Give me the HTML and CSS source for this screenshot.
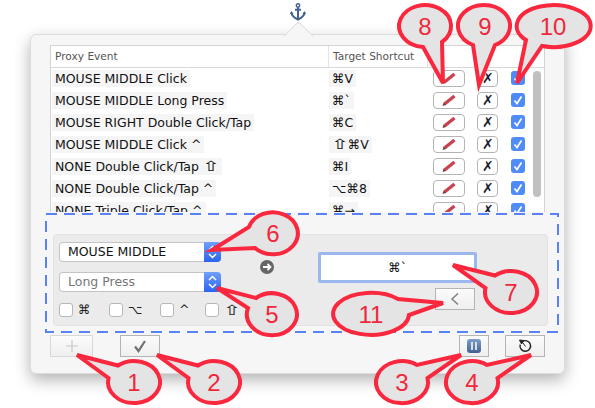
FILE: index.html
```html
<!DOCTYPE html>
<html lang="en">
<head>
  <meta charset="UTF-8" />
  <title>Proxy Events</title>
  <link rel="stylesheet" href="styles.css">
</head>
<body>
  <svg width="0" height="0" class="defs">
    <symbol id="pencil" viewBox="0 0 16 16">
      <path d="M3.500 12 L13.500 4" fill="none" stroke="#c9424f" stroke-width="3.400"/>
      <path d="M1.500 14 L2.500 10.500 L5 13 Z" fill="#7d3b40"/>
    </symbol>
    <symbol id="tick" viewBox="0 0 14 14">
      <path d="M3.500 7.500 L6 10.500 L10.500 3.500" fill="none" stroke="#fff" stroke-width="1.700"/>
    </symbol>
    <symbol id="updown" viewBox="0 0 17 20">
      <path d="M5 8 L8.500 4.500 L12 8 M5 12 L8.500 15.500 L12 12" fill="none" stroke="#fff" stroke-width="1.500"/>
    </symbol>
  </svg>

  <div class="anchor-bar">
    <svg class="anchor" width="16" height="18" viewBox="0 0 16 18">
      <circle cx="8" cy="2.500" r="1.700" fill="none" stroke="#44628f" stroke-width="1.500"/>
      <path d="M8 4 V16.500 M5 6.800 H11" fill="none" stroke="#44628f" stroke-width="2"/>
      <path d="M1.500 9.500 C1.500 13.500 5 15 8 16.500 C11 15 14.500 13.500 14.500 9.500" fill="none" stroke="#44628f" stroke-width="2"/>
      <path d="M0 11 L1.500 8 L3.500 11 Z M12.500 11 L14.500 8 L16 11 Z" fill="#44628f"/>
    </svg>
  </div>

  <div class="panel">
    <div class="table">
      <div class="table-head">
        <div class="col-event">Proxy Event</div>
        <div class="col-target">Target Shortcut</div>
      </div>
      <div class="rows">
        <div class="row">
          <div><span class="cell-text">MOUSE MIDDLE Click</span></div>
          <div><span class="cell-text">⌘V</span></div>
          <button class="btn-edit"><svg width="16" height="16"><use href="#pencil"/></svg></button>
          <button class="btn-del">✗</button>
          <span class="check on"><svg width="14" height="14"><use href="#tick"/></svg></span>
        </div>
        <div class="row">
          <div><span class="cell-text">MOUSE MIDDLE Long Press</span></div>
          <div><span class="cell-text">⌘`</span></div>
          <button class="btn-edit"><svg width="16" height="16"><use href="#pencil"/></svg></button>
          <button class="btn-del">✗</button>
          <span class="check on"><svg width="14" height="14"><use href="#tick"/></svg></span>
        </div>
        <div class="row">
          <div><span class="cell-text">MOUSE RIGHT Double Click/Tap</span></div>
          <div><span class="cell-text">⌘C</span></div>
          <button class="btn-edit"><svg width="16" height="16"><use href="#pencil"/></svg></button>
          <button class="btn-del">✗</button>
          <span class="check on"><svg width="14" height="14"><use href="#tick"/></svg></span>
        </div>
        <div class="row">
          <div><span class="cell-text">MOUSE MIDDLE Click ^</span></div>
          <div><span class="cell-text"><span class="shift">⇧</span>⌘V</span></div>
          <button class="btn-edit"><svg width="16" height="16"><use href="#pencil"/></svg></button>
          <button class="btn-del">✗</button>
          <span class="check on"><svg width="14" height="14"><use href="#tick"/></svg></span>
        </div>
        <div class="row">
          <div><span class="cell-text">NONE Double Click/Tap <span class="shift">⇧</span></span></div>
          <div><span class="cell-text">⌘I</span></div>
          <button class="btn-edit"><svg width="16" height="16"><use href="#pencil"/></svg></button>
          <button class="btn-del">✗</button>
          <span class="check on"><svg width="14" height="14"><use href="#tick"/></svg></span>
        </div>
        <div class="row">
          <div><span class="cell-text">NONE Double Click/Tap ^</span></div>
          <div><span class="cell-text">⌥⌘8</span></div>
          <button class="btn-edit"><svg width="16" height="16"><use href="#pencil"/></svg></button>
          <button class="btn-del">✗</button>
          <span class="check on"><svg width="14" height="14"><use href="#tick"/></svg></span>
        </div>
        <div class="row">
          <div><span class="cell-text">NONE Triple Click/Tap ^</span></div>
          <div><span class="cell-text">⌘→</span></div>
          <button class="btn-edit"><svg width="16" height="16"><use href="#pencil"/></svg></button>
          <button class="btn-del">✗</button>
          <span class="check on"><svg width="14" height="14"><use href="#tick"/></svg></span>
        </div>
      </div>
      <div class="scrollbar"></div>
    </div>

    <div class="editor">
      <div class="editor-left">
        <div class="popup">
          <span class="popup-label">MOUSE MIDDLE</span>
          <span class="popup-arrows"><svg width="17" height="20"><use href="#updown"/></svg></span>
        </div>
        <div class="popup muted">
          <span class="popup-label">Long Press</span>
          <span class="popup-arrows"><svg width="17" height="20"><use href="#updown"/></svg></span>
        </div>
        <div class="modifiers">
          <div class="mod mod-cmd"><span class="check"></span>⌘</div>
          <div class="mod mod-opt"><span class="check"></span>⌥</div>
          <div class="mod mod-ctrl"><span class="check"></span>^</div>
          <div class="mod"><span class="check"></span><span class="shift">⇧</span></div>
        </div>
      </div>
      <svg class="go" width="14" height="14" viewBox="0 0 14 14">
        <circle cx="7" cy="7" r="7" fill="#666"/>
        <path d="M3 7 H10 M7.500 4 L10.500 7 L7.500 10" fill="none" stroke="#fff" stroke-width="1.800"/>
      </svg>
      <div class="editor-right">
        <div class="shortcut-field">⌘`</div>
        <button class="btn-square btn-back">
          <svg width="10" height="14" viewBox="0 0 10 14"><path d="M8 1.500 L2 7 L8 12.500" fill="none" stroke="#808080" stroke-width="1.500"/></svg>
        </button>
      </div>
    </div>

    <div class="toolbar">
      <button class="btn-square btn-add">
        <svg width="14" height="14" viewBox="0 0 14 14"><path d="M7 1 V13 M1 7 H13" stroke="#c8c8c8" stroke-width="1.200"/></svg>
      </button>
      <button class="btn-square btn-ok">
        <svg width="14" height="14" viewBox="0 0 14 14"><path d="M2 7.500 L5.500 12 L12 2" fill="none" stroke="#707070" stroke-width="2.200"/></svg>
      </button>
      <button class="btn-square btn-pause">
        <span class="pause-icon"></span>
      </button>
      <button class="btn-square btn-reset">
        <svg width="14" height="14" viewBox="0 0 14 14">
          <path d="M4 2.800 A5.300 5.300 0 1 1 2.200 5.500" fill="none" stroke="#222" stroke-width="1.400"/>
          <path d="M1.500 1 L6 1.500 L3.500 5 Z M5 4 L7.500 7.500" fill="#222" stroke="#222" stroke-width="1"/>
        </svg>
      </button>
    </div>
  </div>

  <!-- Annotations drawn on top of the screenshot -->
  <svg class="notes" width="595" height="408" viewBox="0 0 595 408">
    <rect class="dash" x="46" y="214" width="512" height="118"/>
    <path class="bubble" d="M442 42 A26 21 0 1 0 423 47 L443 83 Z"/>
    <text class="num" x="425" y="35">8</text>
    <path class="bubble" d="M495 45 A26 21 0 1 0 473 45 L479 85 Z"/>
    <text class="num" x="485" y="35">9</text>
    <path class="bubble" d="M542 46 A37 21 0 1 0 526 40 L517 83 Z"/>
    <text class="num" x="553" y="35">10</text>
    <path class="bubble" d="M249 227 A25 21 0 1 1 255 248 L212 250 Z"/>
    <text class="num" x="273" y="242">6</text>
    <path class="bubble" d="M256 298 A25 21 0 1 1 248 308 L217 288 Z"/>
    <text class="num" x="272" y="323">5</text>
    <path class="bubble" d="M118 365.500 A26 21 0 1 1 108.500 378 L77 355 Z"/>
    <text class="num" x="134" y="391">1</text>
    <path class="bubble" d="M198 365.500 A26 21 0 1 1 188.500 378 L157 355 Z"/>
    <text class="num" x="214" y="391">2</text>
    <path class="bubble" d="M417 365 A26 21 0 1 0 427.500 378 L461 355 Z"/>
    <text class="num" x="402" y="391">3</text>
    <path class="bubble" d="M487 365 A26 21 0 1 0 497.500 378 L531 355 Z"/>
    <text class="num" x="472" y="391">4</text>
    <path class="bubble" d="M495 275.500 A26 21 0 1 1 485.500 288 L453 265 Z"/>
    <text class="num" x="511" y="301">7</text>
    <path class="bubble" d="M398 299 A38 21 0 1 0 409 315 L443 303 Z"/>
    <text class="num" x="371" y="323">11</text>
  </svg>
</body>
</html>
```

FILE: styles.css
```css
body {
  font-family: 'DejaVu Sans', sans-serif;
  margin: 0;
  padding: 0;
  width: 595px;
  height: 408px;
  position: relative;
  overflow: hidden;
  background: white;
  color: #111;
}

.defs {
  position: absolute;
}

.anchor-bar {
  height: 34px;
  padding-top: 3px;
  box-sizing: border-box;
  display: flex;
  justify-content: center;
}

.anchor {
  margin-left: 1px;
}

/* Popover */
.panel {
  position: relative;
  box-sizing: border-box;
  width: 535px;
  height: 340px;
  margin-left: 30px;
  padding: 10px 19px 0;
  background: #f6f6f6;
  border: 1px solid #dcdcdc;
  border-radius: 6px;
  box-shadow: 0 6px 16px rgba(0,0,0,0.3);
}

.panel::before {
  content: "";
  position: absolute;
  top: -10px;
  left: 257px;
  width: 20px;
  height: 20px;
  background: #f6f6f6;
  border-top: 1px solid #dcdcdc;
  border-left: 1px solid #dcdcdc;
  border-top-left-radius: 4px;
  transform: rotate(45deg);
}

/* Table */
.table {
  position: relative;
  height: 166px;
  background: white;
  border: 1px solid #d4d4d4;
  border-bottom: none;
  overflow: hidden;
}

.table-head {
  display: flex;
  height: 21px;
  line-height: 21px;
  font-size: 10.6px;
  color: #555;
  border-bottom: 1px solid #d8d8d8;
}

.col-event {
  width: 273px;
  padding-left: 4px;
}

.col-target {
  width: 94px;
  padding-left: 4px;
  border-left: 1px solid #e4e4e4;
  border-right: 1px solid #e4e4e4;
}

.rows {
  margin-top: -1px;
}

.row {
  display: grid;
  grid-template-columns: 278px 104px 44px 34px 14px;
  height: 22px;
  align-items: center;
  font-size: 12.5px;
}

.row > div:first-child {
  padding-left: 1px;
}

.cell-text {
  background: #f5f5f5;
  padding: 1px 3px;
}

.shift {
  display: inline-block;
  font-size: 14px;
  line-height: 1;
  margin: 0 2px;
  transform: scaleX(1.5);
}

.btn-edit,
.btn-del {
  box-sizing: border-box;
  height: 17px;
  padding: 0;
  display: flex;
  align-items: center;
  justify-content: center;
  background: white;
  border: 1px solid #b4b4b4;
  border-radius: 4px;
}

.btn-edit {
  width: 32px;
}

.btn-del {
  width: 21px;
  font-size: 14px;
  color: #1a1f33;
}

.check {
  box-sizing: border-box;
  display: block;
  width: 14px;
  height: 14px;
  background: white;
  border: 1px solid #b8b8b8;
  border-radius: 3px;
  flex: none;
}

.check.on {
  background: #4f8cf7;
  border: none;
}

.check svg {
  display: block;
}

.scrollbar {
  position: absolute;
  top: 25px;
  left: 482px;
  width: 8px;
  height: 126px;
  background: #c0c0c0;
  border-radius: 4px;
}

/* Editor box */
.editor {
  box-sizing: border-box;
  display: flex;
  width: 495px;
  height: 92px;
  margin: 22px -3px 0 3px;
  padding: 7px 5px;
  background: #ebebeb;
  border: 1px solid #e2e2e2;
  border-radius: 4px;
}

.editor-left {
  width: 162px;
  flex: none;
}

.popup {
  box-sizing: border-box;
  display: flex;
  justify-content: space-between;
  height: 20px;
  margin-bottom: 10px;
  background: white;
  border-radius: 4px;
  box-shadow: 0 0 0 1px #c4c4c4 inset;
  font-size: 12.5px;
  line-height: 19px;
  overflow: hidden;
}

.popup.muted {
  color: #777;
}

.popup-label {
  padding-left: 9px;
}

.popup-arrows {
  width: 17px;
  height: 20px;
  background: linear-gradient(#6fa0fa, #2b63ef);
}

.popup-arrows svg {
  display: block;
}

.modifiers {
  display: flex;
  font-size: 12.5px;
  color: #222;
}

.mod {
  display: flex;
  align-items: center;
  gap: 5px;
  flex: none;
}

.mod-cmd { width: 50px; }
.mod-opt { width: 51px; }
.mod-ctrl { width: 45px; }

.go {
  flex: none;
  margin: 18px 0 0 39px;
}

.editor-right {
  display: flex;
  flex-direction: column;
  align-items: flex-end;
  width: 159px;
  margin-left: 44px;
  padding-top: 10px;
  flex: none;
}

.shortcut-field {
  box-sizing: border-box;
  width: 159px;
  height: 31px;
  line-height: 25px;
  text-align: center;
  font-size: 12.5px;
  color: #111;
  background: white;
  border: 3px solid #9bb8ee;
  border-radius: 2px;
}

.btn-square {
  box-sizing: border-box;
  display: flex;
  align-items: center;
  justify-content: center;
  height: 22px;
  padding: 0;
  background: linear-gradient(#fbfbfb, #efefef);
  border: 1px solid #b4b4b4;
}

.btn-back {
  width: 40px;
  margin: 5px 2px 0 0;
}

/* Bottom toolbar */
.toolbar {
  display: flex;
  margin-top: 9px;
}

.btn-add {
  width: 43px;
  margin-right: 27px;
  border-color: #d8d8d8;
}

.btn-ok {
  width: 40px;
}

.btn-pause {
  width: 30px;
  margin-left: auto;
  margin-right: 16px;
}

.btn-reset {
  width: 40px;
}

.pause-icon {
  display: block;
  width: 14px;
  height: 14px;
  border-radius: 3px;
  background:
    linear-gradient(#d8e0ea, #d8e0ea) 4px 3px / 2px 8px no-repeat,
    linear-gradient(#d8e0ea, #d8e0ea) 8px 3px / 2px 8px no-repeat,
    linear-gradient(#7f9fc9, #41628f);
}

/* Annotation layer */
.notes {
  position: absolute;
  top: 0;
  left: 0;
}

.dash {
  fill: none;
  stroke: #5b82f5;
  stroke-width: 2;
  stroke-dasharray: 11 7;
}

.bubble {
  fill: #e4e4e4;
  stroke: #f9283f;
  stroke-width: 4;
  stroke-linejoin: miter;
}

.num {
  font-family: 'Liberation Sans', sans-serif;
  font-size: 24px;
  fill: #f0283c;
  text-anchor: middle;
}
```
